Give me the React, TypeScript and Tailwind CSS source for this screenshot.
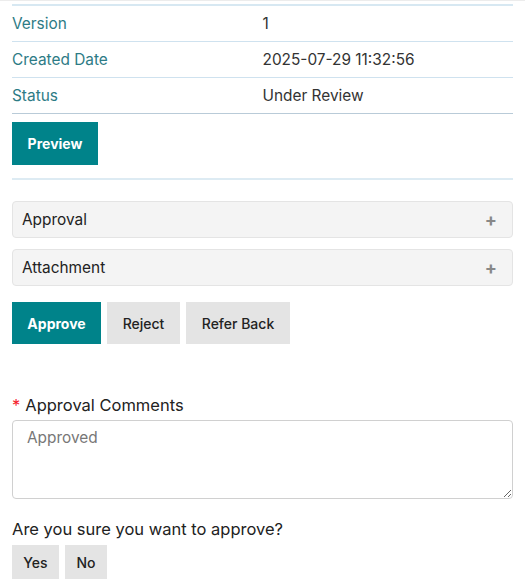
import React from "react";

const rows = [
  { label: "Version", value: "1" },
  { label: "Created Date", value: "2025-07-29 11:32:56" },
  { label: "Status", value: "Under Review" },
];

const sections = ["Approval", "Attachment"];

const App = () => {
  return (
    <div className="min-h-[585px] bg-white font-['Inter',sans-serif] text-[15.4px] text-[#333]">
      <div className="h-[1px] bg-[#ececec]" />
      <div className="px-3 pt-[3px]">
        {/* Detail table */}
        <div className="border-t-2 border-[#d7e8f2]">
          {rows.map((row, i) => (
            <div
              key={row.label}
              className={`grid grid-cols-2 h-[36px] items-center border-b ${
                i === rows.length - 1 ? "border-[#b9cbd8]" : "border-[#cfe2ef]"
              }`}
            >
              <span className="text-[#2d7b85]">{row.label}</span>
              <span className="text-[#333]">{row.value}</span>
            </div>
          ))}
        </div>
        <div className="pt-[8px] pb-[13px] border-b-2 border-[#ddebf3]">
          <button className="h-[43px] w-[86px] bg-[#00838a] text-white text-[14px] font-bold">
            Preview
          </button>
        </div>

        {/* Collapsible sections */}
        <div className="mt-[21px] flex flex-col gap-[11px]">
          {sections.map((s) => (
            <div
              key={s}
              className="h-[37px] flex items-center justify-between pl-[9px] pr-[10px] rounded-[4px] border border-[#e4e4e4] bg-[#f4f4f4] text-[#222]"
            >
              <span>{s}</span>
              <span className="text-[#888] text-[18px] font-bold leading-none pr-[5px]">+</span>
            </div>
          ))}
        </div>

        {/* Actions */}
        <div className="mt-[16px] flex gap-[6px] text-[14px]">
          <button className="h-[42px] w-[89px] bg-[#00838a] text-white font-bold">Approve</button>
          <button className="h-[42px] w-[73px] bg-[#e4e4e4] text-[#222] font-medium">Reject</button>
          <button className="h-[42px] w-[104px] bg-[#e4e4e4] text-[#222] font-medium">Refer Back</button>
        </div>

        {/* Comments */}
        <div className="mt-[51px]">
          <label className="block text-[16.5px] text-[#222] leading-[20px]">
            <span className="text-[#f5222d] mr-[5px]">*</span>
            Approval Comments
          </label>
          <textarea
            className="mt-[5px] block w-full h-[79px] rounded-[4px] border border-[#d0d0d0] px-[14px] py-[5px] text-[15.4px] text-[#666] placeholder:text-[#777] outline-none"
            placeholder="Approved"
          />
        </div>

        <p className="mt-[20px] text-[16.5px] text-[#222] leading-[20px]">Are you sure you want to approve?</p>
        <div className="mt-[6px] flex gap-[6px] text-[14px]">
          <button className="h-[34px] w-[47px] bg-[#e4e4e4] text-[#222] font-medium">Yes</button>
          <button className="h-[34px] w-[42px] bg-[#e4e4e4] text-[#222] font-medium">No</button>
        </div>
      </div>
    </div>
  );
};

export default App;
